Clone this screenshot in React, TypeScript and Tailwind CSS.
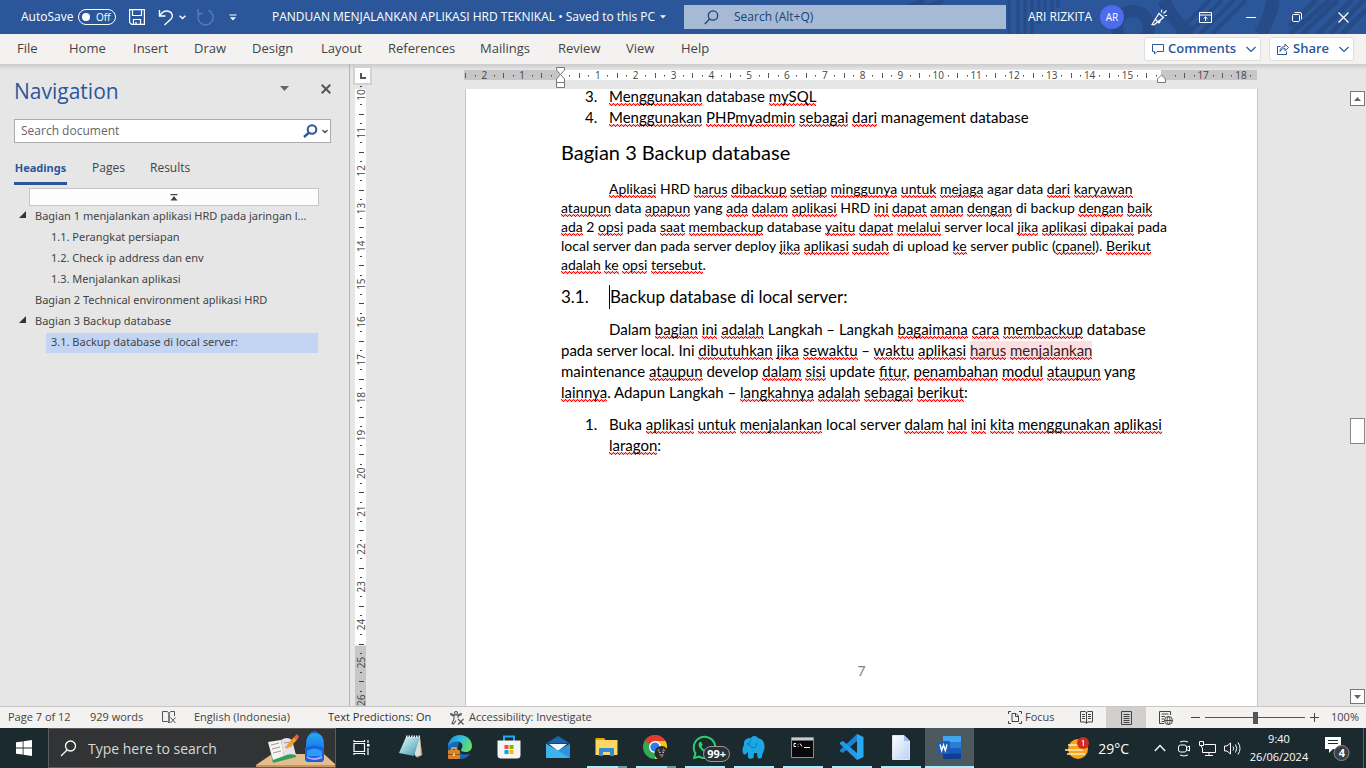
import React from "react";
import { FaWhatsapp } from "react-icons/fa";

const PITCH = 37.83;

/* Words wrapped in [brackets] carry the red proofing underline. */
function Prose({ text }: { text: string }) {
  return (
    <>
      {text.split(/(\[[^\]]+\])/).map((part, i) =>
        part.startsWith("[") ? (
          <span
            key={i}
            className="bg-[linear-gradient(90deg,#f00_1px,#ff000030_1px),linear-gradient(90deg,#ff000060_1px,#f00_1px,#f00_2px,#ff000060_2px,#ff000060_3px,#f00_3px),linear-gradient(90deg,#ff000030_2px,#f00_2px,#f00_3px,#ff000030_3px)] bg-[length:4px_1px] bg-repeat-x pb-px [background-position:left_bottom_2px,left_bottom_1px,left_bottom]"
          >
            {part.slice(1, -1)}
          </span>
        ) : (
          <React.Fragment key={i}>{part}</React.Fragment>
        )
      )}
    </>
  );
}

function Lines({ lines }: { lines: string[] }) {
  return (
    <>
      {lines.map((line, i) => (
        <React.Fragment key={i}>
          {i > 0 && <br />}
          <Prose text={line} />
        </React.Fragment>
      ))}
    </>
  );
}

function ChevronDown({ className = "", w = 10 }: { className?: string; w?: number }) {
  return (
    <svg width={w} height={w / 2 + 2} viewBox="0 0 10 7" fill="none" stroke="currentColor" strokeWidth="1.2" className={className}>
      <path d="M0.5 1 5 5.5 9.500 1" />
    </svg>
  );
}

function TitlePattern() {
  return (
    <svg className="absolute right-0 top-0 h-full w-[460px]" viewBox="0 0 460 34" fill="none" stroke="#264b86" aria-hidden="true">
      <path d="M18 0a22 22 0 0 1-16 5M37 0a40 40 0 0 1-32 5" strokeWidth="5" />
      <path d="M103 0V34M112 0V34M119 0V34M126 0V34M133 0V24M139 0V18M146 0V12M152 0V8" strokeWidth="3" />
      <circle cx="227" cy="27" r="16" strokeWidth="12" />
      <path d="M258 0a65 65 0 0 0 28 34M367 0a80 80 0 0 1-13 34" strokeWidth="13" />
      <path d="M270 34 304 0M282 34 316 0M294 34 328 0M306 34 340 0" strokeWidth="4" />
      <path d="M384 26 410 0M384 34 424 0M396 34 432 0M412 34 446 0M424 34 458 0M436 34 460 10" strokeWidth="5" />
    </svg>
  );
}

function TitleBar() {
  return (
    <header className="relative flex h-[34px] shrink-0 items-center bg-[#2b579a] text-white">
      <TitlePattern />
      <div className="relative flex h-full items-center pl-[21px] text-[12px]">
        <label htmlFor="autosave" className="w-[57px]">AutoSave</label>
        <button id="autosave" role="switch" aria-checked="false" className="flex h-4 w-[38px] items-center gap-[6px] rounded-full border border-white pl-[3px] text-[10px]">
          <span className="h-2 w-2 rounded-full bg-white" />
          Off
        </button>
        <button aria-label="Save" className="ml-[13px]">
          <svg width="16" height="16" viewBox="0 0 16 16" fill="none" stroke="#fff" strokeWidth="1.2">
            <path d="M.6.6H15.400V15.400H2.600L.6 13.400ZM3.500.6V6.500H12.500V.6M4.500 15.400V10.500H11.500V15.400M7 15.400V12.800" />
          </svg>
        </button>
        <button aria-label="Undo" className="ml-[13px]">
          <svg width="16" height="17" viewBox="0 0 16 17" fill="none" stroke="#fff" strokeWidth="1.4">
            <path d="M1.500 1V7H7.500M1.800 6.800C4 3 7.500 1.500 10.500 2.200 14.500 3.200 15.500 7.500 13 10L6.500 16" />
          </svg>
        </button>
        <button aria-label="Undo list" className="ml-[5px]">
          <svg width="7" height="5" viewBox="0 0 7 5" fill="none" stroke="#fff" strokeWidth="1.4"><path d="M.6.8 3.500 3.600 6.400.8" /></svg>
        </button>
        <button aria-label="Repeat" disabled className="ml-[10px]">
          <svg width="18" height="18" viewBox="0 0 18 18" fill="none" stroke="#5a7db5" strokeWidth="1.4">
            <path d="M2 1V5.500H6.500M3.300 5.300A7.500 7.500 0 1 0 12.500 2.500" />
          </svg>
        </button>
        <button aria-label="Customize Quick Access Toolbar" className="ml-[15px]">
          <svg width="8" height="7" viewBox="0 0 8 7" fill="#fff"><path d="M.5.500H7.500V1.500H.5ZM1 3.200H7L4 6.400Z" /></svg>
        </button>
      </div>
      <button className="relative ml-[35px] flex w-[392px] shrink-0 items-center gap-[5px] whitespace-nowrap text-[12px]">
        <span>PANDUAN MENJALANKAN APLIKASI HRD TEKNIKAL • Saved to this PC</span>
        <svg width="6" height="4" viewBox="0 0 6 4" fill="#fff" className="shrink-0"><path d="M0 .3H6L3 3.500Z" /></svg>
      </button>
      <div className="relative ml-5 flex h-6 w-[322px] items-center bg-[#a6bad6] pl-5 text-[#1f4173]">
        <svg width="15" height="15" viewBox="0 0 15 15" fill="none" stroke="currentColor" strokeWidth="1.3">
          <circle cx="9" cy="5.500" r="4.700" /><path d="M5.600 9 .8 14" />
        </svg>
        <input aria-label="Search" placeholder="Search (Alt+Q)" className="ml-[15px] w-60 bg-transparent text-[12px] outline-none placeholder:text-[#1f4173]" />
      </div>
      <div className="relative ml-auto flex h-full items-center">
        <span className="text-[12px]">ARI RIZKITA</span>
        <button aria-label="Account" className="ml-2 mr-3 h-6 w-6 rounded-full bg-[#4f6bed] text-[10px]">AR</button>
        <button aria-label="Coming soon" className="grid h-full w-[46px] place-items-center">
          <svg width="17" height="17" viewBox="0 0 17 17" fill="none" stroke="#fff" strokeWidth="1.200">
            <path d="M1 15.500 8 4.500 12.500 8.500 3 15.800ZM4.500 10.500 8 14C9 13 9.500 12 9 10.500M10.500 3.500 10.800.8M12.500 4.500 15.500 1.500M13.500 6.500H16" />
          </svg>
        </button>
        <button aria-label="Ribbon display options" className="grid h-full w-[46px] place-items-center">
          <svg width="13" height="11" viewBox="0 0 13 11" fill="none" stroke="#fff"><path d="M.5.500H12.500V10.500H.5ZM.5 3H12.500M6.500 9V5M4.500 6.700 6.500 4.800 8.500 6.700" /></svg>
        </button>
        <button aria-label="Minimize" className="grid h-full w-[46px] place-items-center"><span className="h-px w-[10px] bg-white" /></button>
        <button aria-label="Restore" className="grid h-full w-[46px] place-items-center">
          <svg width="10" height="10" viewBox="0 0 10 10" fill="none" stroke="#fff"><rect x=".5" y="2.500" width="7" height="7" rx="1" /><path d="M2.500.5H8A1.500 1.500 0 0 1 9.500 2V7.500" /></svg>
        </button>
        <button aria-label="Close" className="grid h-full w-[46px] place-items-center">
          <svg width="11" height="11" viewBox="0 0 11 11" stroke="#fff" strokeWidth="1.200"><path d="M.5.500 10.500 10.500M10.500.5.500 10.500" /></svg>
        </button>
      </div>
    </header>
  );
}

const tabs = [
  ["File", "w-[52px]"],
  ["Home", "w-16"],
  ["Insert", "w-[61px]"],
  ["Draw", "w-[58px]"],
  ["Design", "w-[69px]"],
  ["Layout", "w-[67px]"],
  ["References", "w-[92px]"],
  ["Mailings", "w-[78px]"],
  ["Review", "w-[68px]"],
  ["View", "w-[55px]"],
  ["Help", "w-[50px]"],
];

function Ribbon() {
  return (
    <nav aria-label="Ribbon" className="flex h-[30px] shrink-0 items-center bg-[#f3f2f1] pl-[17px] text-[13px] text-[#444]">
      {tabs.map(([t, w]) => (
        <button key={t} className={`${w} shrink-0 text-left`}>{t}</button>
      ))}
      <div className="ml-auto flex gap-2 pr-3 font-semibold text-[#2b579a]">
        <button className="flex h-6 w-[117px] items-center rounded-[3px] border border-[#e1dfdd] bg-white pl-[7px]">
          <svg width="12" height="11" viewBox="0 0 12 11" fill="none" stroke="currentColor" className="mr-1"><path d="M.5.500H11.500V7.500H5L2.500 10V7.500H.5Z" /></svg>
          Comments
          <ChevronDown className="ml-auto mr-1" />
        </button>
        <button className="flex h-6 w-[85px] items-center rounded-[3px] border border-[#e1dfdd] bg-white pl-[7px]">
          <svg width="12" height="12" viewBox="0 0 12 12" fill="none" stroke="currentColor" className="mr-1"><path d="M3.500 3.500H.5V11.500H9.500V8.500M3 8.500C3 5.500 5 3.500 8 3.500V1L11.500 4.500 8 7.800V5.500C6 5.500 4.500 6 3 8.500Z" /></svg>
          Share
          <ChevronDown className="ml-auto mr-1" />
        </button>
      </div>
    </nav>
  );
}

const outline = [
  { text: "Bagian 1 menjalankan aplikasi HRD pada jaringan l...", level: 1, open: true },
  { text: "1.1. Perangkat persiapan", level: 2 },
  { text: "1.2. Check ip address dan env", level: 2 },
  { text: "1.3. Menjalankan aplikasi", level: 2 },
  { text: "Bagian 2 Technical environment aplikasi HRD", level: 1 },
  { text: "Bagian 3 Backup database", level: 1, open: true },
  { text: "3.1. Backup database di local server:", level: 2, selected: true },
];

function NavigationPane() {
  return (
    <aside className="flex w-[350px] shrink-0 flex-col border-r border-[#b5b5b5] pl-[14px] pr-[18px] pt-[11px] text-[12px] text-[#444]">
      <div className="flex h-8 items-center">
        <h2 className="text-[21px] leading-8 text-[#2b579a]">Navigation</h2>
        <button aria-label="Task pane options" className="mb-2 ml-auto mr-8 pt-[3px]">
          <svg width="9" height="5" viewBox="0 0 9 5" fill="#666"><path d="M0 0H9L4.500 5Z" /></svg>
        </button>
        <button aria-label="Close pane" className="mb-2 pt-[3px]">
          <svg width="10" height="10" viewBox="0 0 10 10" stroke="#555" strokeWidth="2"><path d="M.7.700 9.300 9.300M9.300.700.7 9.300" /></svg>
        </button>
      </div>
      <div className="mt-3 flex h-6 items-center border border-[#ababab] bg-white px-[6px]">
        <input aria-label="Search document" placeholder="Search document" className="min-w-0 flex-1 bg-transparent outline-none placeholder:text-[#666]" />
        <button aria-label="Search" className="flex items-center gap-[3px]">
          <svg width="15" height="14" viewBox="0 0 15 14" fill="none" stroke="#2b579a" strokeWidth="2"><circle cx="9" cy="5.500" r="4.300" /><path d="M6 8.700 1 13" strokeWidth="2.400" /></svg>
        </button>
        <button aria-label="Search options" className="-mr-1 ml-1 text-[#444]">
          <svg width="6" height="5" viewBox="0 0 6 5" fill="none" stroke="currentColor" strokeWidth="1.300"><path d="M.5 1 3 3.500 5.500 1" /></svg>
        </button>
      </div>
      <div role="tablist" className="mt-[14px] flex h-7">
        <button role="tab" aria-selected="true" className="flex w-[53px] items-start justify-center whitespace-nowrap border-b-[3px] border-[#2b579a] pt-[2px] font-['Noto_Sans',sans-serif] text-[11px] font-bold leading-[18px] text-[#2b579a]">Headings</button>
        <button role="tab" aria-selected="false" className="ml-[25px] flex w-[58px] items-start pt-[2px]">Pages</button>
        <button role="tab" aria-selected="false" className="flex items-start pt-[2px]">Results</button>
      </div>
      <div className="ml-[15px] mr-3 mt-[3px]">
        <button aria-label="Jump to top" className="grid h-[18px] w-full place-items-center border border-[#c6c6c6] bg-[#fdfdfd]">
          <svg width="8" height="7" viewBox="0 0 8 7" fill="#444"><path d="M.5 0H7.500V1.300H.5ZM4 2 7.500 6.500H.5Z" /></svg>
        </button>
      </div>
      <ul className="mr-[13px] font-['Noto_Sans',sans-serif] text-[11px]">
        {outline.map((item) => (
          <li key={item.text} className="flex h-[21px] items-center">
            <span className={item.level === 1 ? "w-[18px] shrink-0 pb-1 pl-[5px]" : "w-8 shrink-0"}>
              {item.open && <svg width="7" height="7" viewBox="0 0 7 7" fill="#333"><path d="M7 0V7H0Z" /></svg>}
            </span>
            <a href="#" className={`flex h-5 min-w-0 flex-1 items-center whitespace-nowrap ${item.level === 1 ? "pl-[3px]" : "pl-[5px]"} ${item.selected ? "bg-[#c3d5f2]" : ""}`}>
              {item.text}
            </a>
          </li>
        ))}
      </ul>
    </aside>
  );
}

function HorizontalRuler() {
  const o = 96;
  const nums = [-2, -1, 1, 2, 3, 4, 5, 6, 7, 8, 9, 10, 11, 12, 13, 14, 15, 17, 18];
  const halves = Array.from({ length: 21 }, (_, i) => o + (i - 2.5) * PITCH).filter((x) => x < 790);
  const quarters = [...nums.flatMap((n) => [n - 0.25, n + 0.25]), -0.25, 0.25, 15.75, 16.25].map((n) => Math.round(o + n * PITCH));
  return (
    <svg width="794" height="25" viewBox="0 0 794 25" className="block shrink-0 overflow-visible" aria-label="Horizontal ruler">
      <path d="M0 6H793V16H0Z" fill="#c6c6c6" />
      <path d="M97 6H697V16H97Z" fill="#fff" />
      {halves.map((x) => <path key={x} d={`M${Math.round(x)}.5 9V14`} stroke="#555" />)}
      {quarters.map((x) => <path key={x} d={`M${x} 11H${x + 1}V12.500H${x}Z`} fill="#444" />)}
      {nums.map((n) => <text key={n} x={o + n * PITCH} y="15" textAnchor="middle" fontSize="10" fill="#444">{Math.abs(n)}</text>)}
      <g fill="#fff" stroke="#777">
        <path d="M92.500 3.500H100.500V6L96.500 10.500 92.500 6Z" />
        <path d="M96.500 10.500 100.500 15V18.500H92.500V15ZM92.500 18.500H100.500V23.500H92.500Z" />
        <path d="M697.500 11 701.500 15V18.500H693.500V15Z" />
      </g>
    </svg>
  );
}

function VerticalRuler() {
  const nums = Array.from({ length: 17 }, (_, i) => i + 10);
  const y = (n: number) => 6 + (n - 10) * PITCH;
  return (
    <svg width="11" height="617" viewBox="0 0 11 617" className="block shrink-0 overflow-visible" aria-label="Vertical ruler">
      <path d="M0 0H11V556H0Z" fill="#fff" />
      <path d="M0 557H11V617H0Z" fill="#c6c6c6" />
      {nums.map((n) => (
        <g key={n}>
          <text x="0" y="0" transform={`translate(9.500 ${y(n)}) rotate(-90)`} textAnchor="middle" fontSize="10" fill="#444">{n}</text>
          <path d={`M5 ${Math.round(y(n) - PITCH / 4)}h2v1h-2ZM5 ${Math.round(y(n) + PITCH / 4)}h2v1h-2ZM4 ${Math.round(y(n) + PITCH / 2)}h5v1h-5Z`} fill="#444" />
        </g>
      ))}
    </svg>
  );
}

function ScrollBar() {
  const cls = "grid h-[15px] w-[15px] shrink-0 place-items-center border border-[#777] bg-white";
  return (
    <div className="flex w-[17px] shrink-0 flex-col items-center pb-[2px] pt-[27px]">
      <button aria-label="Scroll up" className={cls}><svg width="7" height="4" viewBox="0 0 7 4" fill="#666"><path d="M0 4H7L3.500 0Z" /></svg></button>
      <span className="grow-[312]" />
      <span className="h-[26px] w-[15px] shrink-0 border border-[#888] bg-white" />
      <span className="grow-[245]" />
      <button aria-label="Scroll down" className={cls}><svg width="7" height="4" viewBox="0 0 7 4" fill="#666"><path d="M0 0H7L3.500 4Z" /></svg></button>
    </div>
  );
}

function DocumentPage() {
  return (
    <article className="ml-px flex min-h-0 flex-1 flex-col overflow-hidden whitespace-nowrap border-x border-[#c6c6c6] bg-white pb-[26px] pl-[95px] font-[Lato,Carlito,sans-serif] text-[15px] leading-[21px] text-black">
      <ol start={3} className="-mt-[3px]">
        <li className="flex"><span className="ml-6 w-6 shrink-0">3.</span><span><Prose text="[Menggunakan] database [mySQL]" /></span></li>
        <li className="flex"><span className="ml-6 w-6 shrink-0">4.</span><span><Prose text="[Menggunakan] [PHPmyadmin] [sebagai] [dari] management database" /></span></li>
      </ol>
      <h1 className="mt-[11px] text-[20px] leading-[26px]">Bagian 3 Backup database</h1>
      <p className="mt-[14px] indent-12 text-[14px] leading-[19px]">
        <Lines
          lines={[
            "[Aplikasi] HRD [harus] [dibackup] [setiap] [minggunya] [untuk] [mejaga] agar data [dari] [karyawan]",
            "[ataupun] data [apapun] yang [ada] [dalam] [aplikasi] HRD [ini] [dapat] [aman] [dengan] di backup [dengan] [baik]",
            "[ada] 2 [opsi] pada [saat] [membackup] database [yaitu] [dapat] [melalui] server local [jika] [aplikasi] [dipakai] pada",
            "local server dan pada server deploy [jika] [aplikasi] [sudah] di upload [ke] server public ([cpanel]). [Berikut]",
            "[adalah] [ke] [opsi] [tersebut].",
          ]}
        />
      </p>
      <h2 className="mt-[11px] flex text-[17px] leading-6">
        <span className="w-12">3.1.</span>
        <span className="border-l border-black">Backup database di local server:</span>
      </h2>
      <p className="mt-[10px] indent-12">
        <Lines
          lines={[
            "Dalam [bagian] [ini] [adalah] Langkah – Langkah [bagaimana] [cara] [membackup] database",
            "pada server local. Ini [dibutuhkan] [jika] [sewaktu] – [waktu] [aplikasi] ",
          ]}
        />
        <span className="bg-[#fbdfe1] text-[#40181c]"><Prose text="[harus] [menjalankan]" /></span>
        <br />
        <Lines
          lines={[
            "maintenance [ataupun] develop [dalam] [sisi] update [fitur], [penambahan] [modul] [ataupun] yang",
            "[lainnya]. Adapun Langkah – [langkahnya] [adalah] [sebagai] [berikut]:",
          ]}
        />
      </p>
      <ol className="mt-[11px]">
        <li className="flex">
          <span className="ml-6 w-6 shrink-0">1.</span>
          <span>
            <Lines
              lines={[
                "Buka [aplikasi] [untuk] [menjalankan] local server [dalam] [hal] [ini] [kita] [menggunakan] [aplikasi]",
                "[laragon]:",
              ]}
            />
          </span>
        </li>
      </ol>
      <p className="mt-auto pr-[95px] text-center text-[14px] leading-[19px] text-[#7f7f7f]">7</p>
    </article>
  );
}

function StatusBar() {
  return (
    <footer className="flex h-[22px] shrink-0 items-center border-t border-[#c8c6c4] bg-[#f3f2f1] pl-2 text-[11px] text-[#444]">
      <button className="w-[82px] text-left">Page 7 of 12</button>
      <button className="w-[72px] text-left">929 words</button>
      <button aria-label="Proofing errors" className="w-8">
        <svg width="15" height="13" viewBox="0 0 15 13" fill="none" stroke="#555"><path d="M7 2.500 5.500.5H.5V10.500H5.500L7 12ZM7 2.500 8.500.5H12.500V5M7 12V2.500M8.500 6.500 13.500 12M13.500 6.500 8.500 12" /></svg>
      </button>
      <button className="w-[134px] text-left">English (Indonesia)</button>
      <button className="w-[122px] text-left text-[#333]">Text Predictions: On</button>
      <button className="flex items-center gap-1">
        <svg width="15" height="14" viewBox="0 0 15 14" fill="none" stroke="#555" strokeWidth="1.100"><circle cx="6" cy="2" r="1.500" /><path d="M1 2.500C0 3.500 1 4.500 4 5V8L2 12.500 3.500 13 6 9.500M11 2.500C12 3.500 11 4.500 8 5V7M1 2.500 4 4H8L11 2.500M8 8 13.500 13.500M13.500 8 8 13.500" /></svg>
        Accessibility: Investigate
      </button>
      <div className="ml-auto flex h-full items-center">
        <button className="flex w-[58px] items-center gap-[3px]">
          <svg width="14" height="13" viewBox="0 0 14 13" fill="none" stroke="#444"><path d="M3 .5H.5V3M11 .5H13.500V3M3 12.500H.5V10M11 12.500H13.500V10M4 2.500H8L10.500 5V10.500H4ZM7.500 2.500V5.500H10.500" /></svg>
          Focus
        </button>
        <button aria-label="Read mode" className="grid h-full w-10 place-items-center">
          <svg width="13" height="13" viewBox="0 0 13 13" fill="none" stroke="#444"><path d="M6.500 1.500V12.500M.5.500H5L6.500 1.500 8 .5H12.500V11H8L6.500 12 5 11H.5ZM2 3.500H5M2 5.500H5M2 7.500H5M8 3.500H11M8 5.500H11M8 7.500H11" /></svg>
        </button>
        <button aria-label="Print layout" className="grid h-full w-10 place-items-center bg-[#d2d0ce]">
          <svg width="11" height="14" viewBox="0 0 11 14" fill="none" stroke="#444"><path d="M.5.500H10.500V13.500H.5ZM2.500 3.500H8.500M2.500 5.500H8.500M2.500 7.500H8.500M2.500 9.500H8.500M2.500 11.500H8.500" /></svg>
        </button>
        <button aria-label="Web layout" className="grid h-full w-10 place-items-center">
          <svg width="14" height="14" viewBox="0 0 14 14" fill="none" stroke="#444"><path d="M5 12.500H.5V.5H11.500V4M2.500 3H9.500M2.500 5.500H6M2.500 8H5M2.500 10.500H5" /><circle cx="9.500" cy="9.500" r="4" /><path d="M5.500 9.500H13.500M9.500 5.500C7.500 8 7.500 11 9.500 13.500 11.500 11 11.500 8 9.500 5.500" /></svg>
        </button>
        <button aria-label="Zoom out" className="ml-[5px] h-px w-[9px] bg-[#444]" />
        <label className="mx-[5px] flex items-center">
          <span className="sr-only">Zoom</span>
          <input
            type="range"
            min="0"
            max="100"
            defaultValue="50"
            className="h-3 w-[100px] appearance-none bg-transparent bg-[linear-gradient(#555,#555)] bg-[length:100%_1px] bg-center bg-no-repeat [&::-webkit-slider-thumb]:h-3 [&::-webkit-slider-thumb]:w-[5px] [&::-webkit-slider-thumb]:appearance-none [&::-webkit-slider-thumb]:bg-[#555]"
          />
        </label>
        <button aria-label="Zoom in"><svg width="9" height="9" viewBox="0 0 9 9" stroke="#444"><path d="M0 4.500H9M4.500 0V9" /></svg></button>
        <button className="ml-3 mr-[7px] w-7 text-[11px]">100%</button>
      </div>
    </footer>
  );
}

const NotepadIcon = () => (
  <svg width="26" height="26" viewBox="0 0 26 26">
    <defs><linearGradient id="np" x1="0" y1="0" x2="1" y2="1"><stop stopColor="#e8fafa" /><stop offset=".5" stopColor="#8ecbd6" /><stop offset="1" stopColor="#3c8ea3" /></linearGradient></defs>
    <path d="M22 4 24.500 21 19 24Z" fill="#b98a3e" /><path d="M8 3H22L23 21 18 23Z" fill="#d9dfe0" /><path d="M8 3H22L16 22 1 19Z" fill="url(#np)" /><path d="M8 2.500H22" stroke="#eee" strokeWidth="2" strokeDasharray="1.500 1" />
  </svg>
);
const EdgeIcon = () => (
  <svg width="26" height="26" viewBox="0 0 26 26">
    <defs>
      <linearGradient id="ed" x1="0" y1="0" x2="1" y2=".4"><stop stopColor="#1b88d8" /><stop offset=".55" stopColor="#2fc1dc" /><stop offset="1" stopColor="#62dc6a" /></linearGradient>
    </defs>
    <path d="M1 13C1 6 6 4 10 6 14 8 10 12 11 16 12 20 17 22 23 19.500 21 23.500 17 25 13 25 6 25 1 20 1 13Z" fill="#1668b5" />
    <path d="M1 12C2 4 8 1 13 1 20 1 25 6 25 12 25 16 22 18 18.500 18 15.500 18 14 17 14 16 14 15 15.500 14.500 15.500 12 15.500 9 13 7.500 10 7.500 6 7.500 2.500 10 1 12Z" fill="url(#ed)" />
    <rect x="1" y="16" width="12" height="9" rx="1" fill="#d9822b" /><path d="M5 16V14H9V16" fill="none" stroke="#f5b04c" strokeWidth="1.300" /><path d="M1 20.500H13" stroke="#8f4d10" /><rect x="6" y="19.500" width="2" height="2.500" fill="#fbd27a" />
  </svg>
);
const StoreIcon = () => (
  <svg width="24" height="24" viewBox="0 0 24 24">
    <path d="M7 6V1.500H17V6" fill="none" stroke="#22a7e8" strokeWidth="2" /><path d="M0.500 5.500H23.500V20Q23.500 23.500 20 23.500H4Q.5 23.500.5 20Z" fill="#f5f5f5" />
    <path d="M7.500 10h4v4h-4Z" fill="#f25022" /><path d="M12.500 10h4v4h-4Z" fill="#7fba00" /><path d="M7.500 15h4v4h-4Z" fill="#00a4ef" /><path d="M12.500 15h4v4h-4Z" fill="#ffb900" />
  </svg>
);
const MailIcon = () => (
  <svg width="24" height="24" viewBox="0 0 24 24">
    <path d="M0 8.500 12 1 24 8.500Z" fill="#1765ae" /><path d="M3 9H21L12 16Z" fill="#f3f6fa" /><path d="M24 8.500V23H0Z" fill="#2f8fe0" /><path d="M0 8.500 24 23H0Z" fill="#3db4f0" />
  </svg>
);
const ExplorerIcon = () => (
  <svg width="23" height="20" viewBox="0 0 23 20">
    <path d="M.5 1H9L11 3.500H.5Z" fill="#e8a20c" /><path d="M.5 3H22.500V18H.5Z" fill="#fdd663" /><path d="M4 19V12Q4 11 5 11H18Q19 11 19 12V19H15V15H8V19Z" fill="#2f8ad8" />
  </svg>
);
const ChromeIcon = () => (
  <svg width="27" height="27" viewBox="0 0 27 27">
    <circle cx="13" cy="13" r="12" fill="#34a853" />
    <path d="M13 13 2.600 7A12 12 0 0 1 23.400 7Z" fill="#e33b2e" /><path d="M13 13 13 7H23.400A12 12 0 0 1 13 25Z" fill="#fbc116" />
    <circle cx="13" cy="13" r="6" fill="#fff" /><circle cx="13" cy="13" r="4.600" fill="#2b7de9" />
    <circle cx="19.500" cy="19" r="7" fill="#27292b" /><path d="M15 17 17 14 18 18ZM21 14 24 17 20 18ZM17 20H22L20 24Z" fill="#77706a" /><path d="M17 18.500h1.500M20.500 18.500H22" stroke="#d0c8c0" />
  </svg>
);
const ElephantIcon = () => (
  <svg width="25" height="25" viewBox="0 0 25 25">
    <path d="M3 10C2 4 7 3 10 3 12 0 16 1 17 3 22 4 24 8 23.500 13 23 17 21 18 21 22 20 24 17 24 16.500 22L16 18H13L12.500 23Q9.500 24.500 7 23L7 17C5.500 18 5 20 3 19.500 1 18 1 13 3 10Z" fill="#1ba8e2" />
    <path d="M10.500 4C8 7 8 11 11 12.500 14 13.500 16 11 15.500 8" fill="none" stroke="#0b7bb3" /><circle cx="7" cy="9" r=".8" fill="#074f79" />
  </svg>
);
const CmdIcon = () => (
  <svg width="23" height="21" viewBox="0 0 23 21">
    <path d="M.5.500H22.500V20.500H.5Z" fill="#090909" stroke="#8a8f91" /><path d="M1 1H22V3.500H1Z" fill="#c9cdcf" />
    <path d="M5 6.500H3V9.500H5M7 7V7.700M7 9V9.700M9 6.500 11 9.500M13 10.500H19" stroke="#fff" fill="none" />
  </svg>
);
const CodeIcon = () => (
  <svg width="25" height="26" viewBox="0 0 25 26">
    <path d="M18 0 24.500 3V23L18 26Z" fill="#2aa8f2" /><path d="M18 0V7L4 19 1 17.500V16Z" fill="#1684d0" /><path d="M18 26V19L4 7 1 8.500V10Z" fill="#1f9cf0" />
  </svg>
);
const FileIcon = () => (
  <svg width="18" height="25" viewBox="0 0 18 25">
    <defs><linearGradient id="fi" x1="0" y1="0" x2="1" y2="1"><stop stopColor="#fff" /><stop offset="1" stopColor="#b9d0f5" /></linearGradient></defs>
    <path d="M.5.500H12L17.500 6V24.500H.5Z" fill="url(#fi)" stroke="#dbe6f7" /><path d="M12 .5V6H17.500Z" fill="#9cbcf0" />
  </svg>
);
const WordIcon = () => (
  <svg width="25" height="25" viewBox="0 0 25 25">
    <path d="M6 1H24V7H6Z" fill="#41a5ee" /><path d="M6 7H24V13H6Z" fill="#2b7cd3" /><path d="M6 13H24V18.500H6Z" fill="#185abd" /><path d="M6 18.500H24V24H6Z" fill="#103f91" />
    <rect x="0" y="6" width="13" height="13" rx="1" fill="#1b5ebe" /><path d="M3 9.500 4.700 15.500 6.500 10 8.300 15.500 10 9.500" stroke="#fff" strokeWidth="1.400" fill="none" />
  </svg>
);
const TaskViewIcon = () => (
  <svg width="17" height="15" viewBox="0 0 17 15" fill="none" stroke="#fff" strokeWidth="1.200">
    <path d="M1 3.500H11.500V11.500H1ZM1 0V1.500H11.500V0M1 15V13.500H11.500V15M15 0V3M15 8V15" /><path d="M14 4h2.500v2.500h-2.500Z" fill="#fff" stroke="none" />
  </svg>
);
const WhatsAppIcon = () => (
  <span className="relative">
    <FaWhatsapp size={27} color="#27d366" />
    <span className="absolute -right-3 top-3 rounded-full border border-[#999] bg-[#2b3133] px-[3px] text-[11px] font-bold leading-[14px] text-white">99+</span>
  </span>
);

const apps: { name: string; icon: React.FC; running?: boolean; active?: boolean; multi?: boolean }[] = [
  { name: "Task View", icon: TaskViewIcon },
  { name: "Notepad", icon: NotepadIcon },
  { name: "Edge", icon: EdgeIcon },
  { name: "Microsoft Store", icon: StoreIcon },
  { name: "Mail", icon: MailIcon },
  { name: "File Explorer", icon: ExplorerIcon, running: true, multi: true },
  { name: "Chrome", icon: ChromeIcon, running: true, multi: true },
  { name: "WhatsApp", icon: WhatsAppIcon, running: true },
  { name: "Database", icon: ElephantIcon, running: true },
  { name: "Command Prompt", icon: CmdIcon, running: true },
  { name: "Visual Studio Code", icon: CodeIcon, running: true },
  { name: "Document", icon: FileIcon, running: true },
  { name: "Word", icon: WordIcon, running: true, active: true },
];

function Taskbar() {
  return (
    <footer className="flex h-10 shrink-0 items-stretch bg-[#1a2a2f] text-white">
      <button aria-label="Start" className="grid w-12 place-items-center">
        <svg width="16" height="16" viewBox="0 0 16 16" fill="#fff"><path d="M0 2.300 6.700 1.400V7.600H0ZM7.500 1.300 16 0V7.600H7.500ZM0 8.400H6.700V14.600L0 13.700ZM7.500 8.400H16V16L7.500 14.700Z" /></svg>
      </button>
      <div className="mr-px flex w-72 items-center border border-[#5a5c5d] bg-[#323334] pl-[11px]">
        <svg width="17" height="17" viewBox="0 0 17 17" fill="none" stroke="#fff" strokeWidth="1.300"><circle cx="10.500" cy="6" r="5" /><path d="M7 10 1 16" /></svg>
        <input aria-label="Search Windows" placeholder="Type here to search" className="ml-[11px] min-w-0 flex-1 bg-transparent text-[14px] outline-none placeholder:text-[#d8d8d8]" />
        <svg width="79" height="38" viewBox="0 0 79 38" aria-hidden="true">
          <defs><linearGradient id="bp" x1="0" y1="0" x2="0" y2="1"><stop stopColor="#29a7f5" /><stop offset="1" stopColor="#0a54d6" /></linearGradient></defs>
          <path d="M16 25H68L79 35V38H0V36Z" fill="#e4bd8d" /><path d="M0 36H79V38H0Z" fill="#c6945f" />
          <path d="M13 16 36 12 40 28 17 34Z" fill="#2f9e62" /><path d="M12 13 25 11 28 27 17 31Z" fill="#f7f3ee" /><path d="M25 11Q31 7 36 11L40 26Q33 24 28 27Z" fill="#e7e1ea" />
          <path d="M15 16 23 14M16 20 24 18M17 24 25 22M28 14 35 13M29 18 36 17" stroke="#9b98a6" />
          <path d="M30 20 31 16 38 8 41 11 34 18Z" fill="#f59c1c" /><path d="M38 8 41 5 43 8 41 11Z" fill="#ef5a4c" />
          <path d="M54 6Q58 0 63 6" fill="none" stroke="#1c62cc" strokeWidth="2" /><path d="M50 16Q50 4 58.500 4 68 4 68 16V29Q68 33 64 33H53Q49 33 49 29Z" fill="url(#bp)" />
          <path d="M49 19Q58 14 68 19V29Q68 33 64 33H53Q49 33 49 29Z" fill="#1463e0" /><path d="M51 22Q58 17 66 22V27H51Z" fill="#2e9bf7" /><path d="M51 28Q58 32 66 28" fill="none" stroke="#b8a0ff" strokeWidth="2" />
        </svg>
      </div>
      {apps.map(({ name, icon: Icon, running, active, multi }) => (
        <button key={name} aria-label={name} className={`flex w-[49px] shrink-0 flex-col items-center ${active ? "bg-[#4c595e]" : ""}`}>
          <span className="grid flex-1 place-items-center"><Icon /></span>
          <span className={`flex h-[2px] ${active ? "w-full" : "w-10"} ${running ? "bg-[#a5eefb]" : ""} justify-end`}>
            {multi && <span className="w-[9px] bg-[#6f9da6]" />}
          </span>
        </button>
      ))}
      <div className="ml-auto flex items-center">
        <button className="flex items-center text-[14px]">
          <svg width="25" height="25" viewBox="0 0 25 25" className="mr-2">
            <circle cx="13" cy="13" r="10" fill="#f7a51c" /><path d="M3 9H18M0 14H18M2 18H20" stroke="#ffe9b8" strokeWidth="1.600" />
            <circle cx="18" cy="7" r="6" fill="#cf2b22" /><path d="M16.700 5.500 18.300 4.300V10" stroke="#fff" fill="none" />
          </svg>
          29°C
        </button>
        <button aria-label="Show hidden icons" className="ml-[25px]"><svg width="12" height="8" viewBox="0 0 12 8" fill="none" stroke="#fff" strokeWidth="1.300"><path d="M.8 7 6 1.500 11.200 7" /></svg></button>
        <button aria-label="Meet now" className="ml-3"><svg width="12" height="17" viewBox="0 0 12 17" fill="none" stroke="#fff"><rect x=".5" y="5" width="8" height="7" rx="2" /><path d="M8.500 7.500 11.500 6V11L8.500 9.500M2 2Q6 .0 10 2M2 15Q6 17 10 15" /></svg></button>
        <button aria-label="Network" className="ml-[9px]"><svg width="17" height="15" viewBox="0 0 17 15" fill="none" stroke="#fff"><path d="M5.500 3.500H16.500V11.500H3.500V6.500M10 11.500V14.500M6 14.500H14M.5.500H4.500V4.500H.5ZM2.500 4.500V6.500" /></svg></button>
        <button aria-label="Volume" className="ml-2"><svg width="17" height="15" viewBox="0 0 17 15" fill="none" stroke="#fff"><path d="M.5 5H3L6.500 2V13L3 10H.5ZM9 5.500Q10.500 7.500 9 9.500M11.500 3.500Q14 7.500 11.500 11.500M14 1.500Q18 7.500 14 13.500" /></svg></button>
        <button className="ml-2 w-[60px] whitespace-nowrap text-center text-[11px] leading-[18px]">9:40<br />26/06/2024</button>
        <button aria-label="4 new notifications" className="relative ml-4 mr-[12px] h-[26px] w-[26px]">
          <svg width="26" height="26" viewBox="0 0 26 26"><path d="M0 2H16V14H8L4 18V14H0Z" fill="#fff" /><path d="M3 5.500H13M3 8.500H13" stroke="#1a2a2f" /><circle cx="16.500" cy="18" r="7.500" fill="#3a4144" stroke="#8a8f91" /></svg>
          <span className="absolute left-[9px] top-[10px] w-4 text-center text-[11px] font-bold leading-4">4</span>
        </button>
        <span className="mr-[2px] h-10 w-px bg-[#56646a]" />
      </div>
    </footer>
  );
}

export default function App() {
  return (
    <div className="flex h-screen flex-col overflow-hidden bg-[#e6e6e6] font-['Open_Sans','Noto_Sans',sans-serif]">
      <TitleBar />
      <Ribbon />
      <main className="flex min-h-0 flex-1 overflow-hidden bg-[linear-gradient(#cbcbcb,#e6e6e6_6px)]">
        <NavigationPane />
        <div className="flex w-[23px] shrink-0 flex-col pl-[5px]">
          <div className="mb-[4px] ml-[-2px] mt-[2px] grid h-[19px] w-[19px] shrink-0 place-items-center border-2 border-[#d2d2d2] bg-white">
            <svg width="6" height="6" viewBox="0 0 6 6" fill="none" stroke="#555" strokeWidth="2"><path d="M1 0V5H6" /></svg>
          </div>
          <VerticalRuler />
        </div>
        <div className="flex min-w-0 flex-1 justify-center">
          <div className="flex w-[794px] shrink-0 flex-col">
            <HorizontalRuler />
            <DocumentPage />
          </div>
        </div>
        <ScrollBar />
      </main>
      <StatusBar />
      <Taskbar />
    </div>
  );
}
